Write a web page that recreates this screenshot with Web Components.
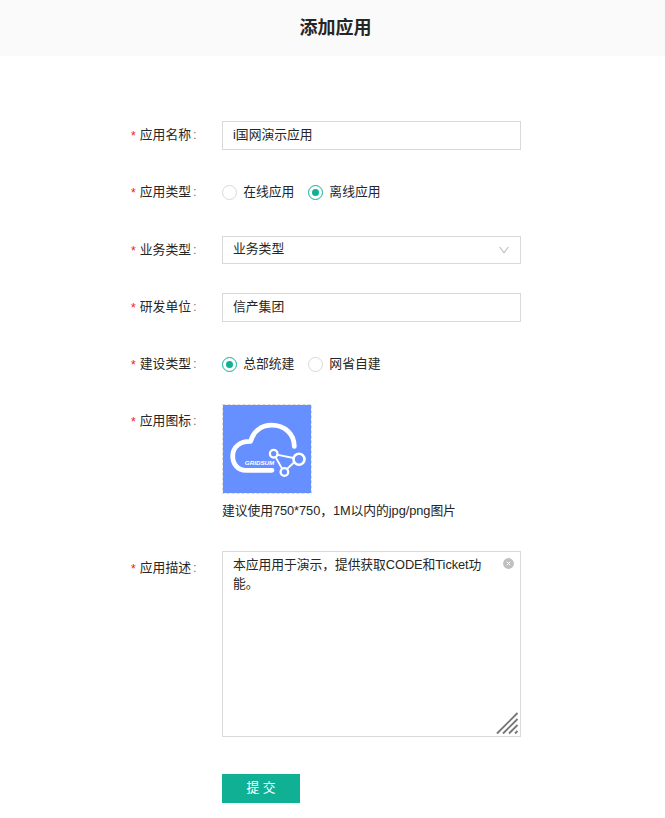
<!DOCTYPE html>
<html lang="zh-CN"><head><meta charset="utf-8"><title>添加应用</title>
<style>
html,body{margin:0;background:#fff}
body{font:12.8px/20px "Liberation Sans","Noto Sans CJK SC",sans-serif;color:#262626;width:665px;height:818px;overflow:hidden}
</style></head><body>
<app-page heading="添加应用">
<form-row label="应用名称" style="--h:57px"><text-field value="i国网演示应用"></text-field></form-row>
<form-row label="应用类型" style="--h:58px"><radio-option label="在线应用"></radio-option><radio-option label="离线应用" checked></radio-option></form-row>
<form-row label="业务类型" style="--h:57px"><text-field value="业务类型" select></text-field></form-row>
<form-row label="研发单位" style="--h:57px"><text-field value="信产集团"></text-field></form-row>
<form-row label="建设类型" style="--h:57px"><radio-option label="总部统建" checked></radio-option><radio-option label="网省自建"></radio-option></form-row>
<form-row label="应用图标" style="--h:144px"><app-icon note="建议使用750*750，1M以内的jpg/png图片"></app-icon></form-row>
<form-row label="应用描述" style="--h:223px;--lt:7px"><text-area>本应用用于演示，提供获取CODE和Ticket功能。</text-area></form-row>
<submit-button>提 交</submit-button>
</app-page>
<script>
const define=(name,render)=>customElements.define(name,class extends HTMLElement{
  connectedCallback(){
    if(this.shadowRoot)return;
    this.attachShadow({mode:'open'}).innerHTML=render(this);
  }
});
define('app-page',e=>`<style>
:host{display:block}
header{height:56px;box-sizing:border-box;padding-top:15px;background:#fafafa;text-align:center;font-weight:700;font-size:18px;line-height:27px;padding-left:6px}
main{padding:65px 144px 0 130px;display:flex;flex-direction:column}
</style><header>${e.getAttribute('heading')}</header><main><slot></slot></main>`);
define('form-row',e=>`<style>
:host{display:grid;grid-template-columns:92px 299px;height:var(--h);align-items:start}
.label{display:flex;padding-top:var(--lt,4px);white-space:nowrap}
.star{width:10.3px;margin-left:-.5px;color:#f5222d;font-family:"Liberation Mono",monospace;font-size:12.8px;line-height:23px}
.colon{margin-left:2px;color:#777}
.control{display:flex}
</style><div class="label"><span class="star">*</span><span>${e.getAttribute('label')}</span><span class="colon">:</span></div><div class="control"><slot></slot></div>`);
define('text-field',e=>{const s=e.hasAttribute('select');return `<style>
:host{display:flex;box-sizing:border-box;width:299px;height:${s?28:29}px;border:1px solid #d9d9d9;padding:${s?2:3}px 10px 0;justify-content:space-between}
svg{margin:6px 1px 0 0}
</style><span>${e.getAttribute('value')}</span>${s?'<svg width="10" height="10" viewBox="0 0 10 10"><path d="M.7 2 5 7.8 9.3 2" fill="none" stroke="#bfbfbf" stroke-width="1.2"/></svg>':''}`});
define('radio-option',e=>`<style>
:host{display:flex;margin-right:13.8px;padding-top:4px;white-space:nowrap}
i{box-sizing:border-box;width:15px;height:15px;border:1px solid #d9d9d9;border-radius:50%;margin:3px 6.2px 0 0;display:grid;place-items:center}
:host([checked]) i{border-color:#10b094}
:host([checked]) i::after{content:"";width:7px;height:7px;border-radius:50%;background:#10b094}
</style><i></i><span>${e.getAttribute('label')}</span>`);
define('app-icon',e=>`<style>
:host{display:block;margin-top:-3px}
svg{display:block;margin-bottom:7px}
text{font:italic 700 6px "Liberation Sans",sans-serif}
p{margin:0;white-space:nowrap;letter-spacing:-.06px}
</style><svg width="90" height="90" viewBox="0 0 90 90">
<rect x=".5" y=".5" width="89" height="89" fill="none" stroke="#d9d9d9" stroke-dasharray="3 2"/>
<rect x="1" y="1" width="88" height="88" fill="#668fff"/>
<g fill="none" stroke="#fff"><path d="M50 66.3H24C15.5 66.3 10.7 60 10.7 52 10.7 43 18 37.2 28.6 37.4 31.5 27.5 39 21.2 49.5 21.2 63 21.2 72.3 30.5 72.3 42.4" stroke-width="4.8" stroke-linecap="round" stroke-linejoin="round"/>
<path d="M54.6 50.6 71.5 54M53.5 53 60 64.5M72.5 58 65 65" stroke-width="1.8"/>
<circle cx="51.7" cy="49.7" r="3.8" stroke-width="2.3"/><circle cx="77" cy="55.2" r="5.5" stroke-width="2.6"/><circle cx="62.4" cy="68" r="3.8" stroke-width="2.3"/></g>
<text x="22.8" y="61.4" fill="#fff" textLength="29.5" lengthAdjust="spacingAndGlyphs">GRIDSUM</text></svg><p>${e.getAttribute('note')}</p>`);
define('text-area',e=>`<style>
:host{display:block;box-sizing:border-box;width:299px;height:186px;border:1px solid #d9d9d9;padding:3px 34px 0 10px;line-height:19px;letter-spacing:-.06px;position:relative}
.clear{position:absolute;right:6px;top:6px}
.grip{position:absolute;right:1px;bottom:1px}
</style><slot></slot><svg class="clear" width="11" height="11" viewBox="0 0 11 11"><circle cx="5.5" cy="5.5" r="5.4" fill="#bfbfbf"/><path d="M3.7 3.7 7.3 7.3M7.3 3.7 3.7 7.3" stroke="#fff"/></svg>
<svg class="grip" width="24" height="24" viewBox="0 0 24 24"><path d="M2 22.5 22.5 2M8 22.5 22.5 8M14 22.5 22.5 14M20 22.5 22.5 20" stroke="#777" stroke-width="1.8"/></svg>`);
define('submit-button',e=>`<style>
:host{display:block;box-sizing:border-box;margin-left:92px;width:78px;height:29px;padding-top:4px;background:#10b094;color:#fff;text-align:center;box-shadow:0 2px 0 #f6f6f6}
</style><slot></slot>`);
</script></body></html>
